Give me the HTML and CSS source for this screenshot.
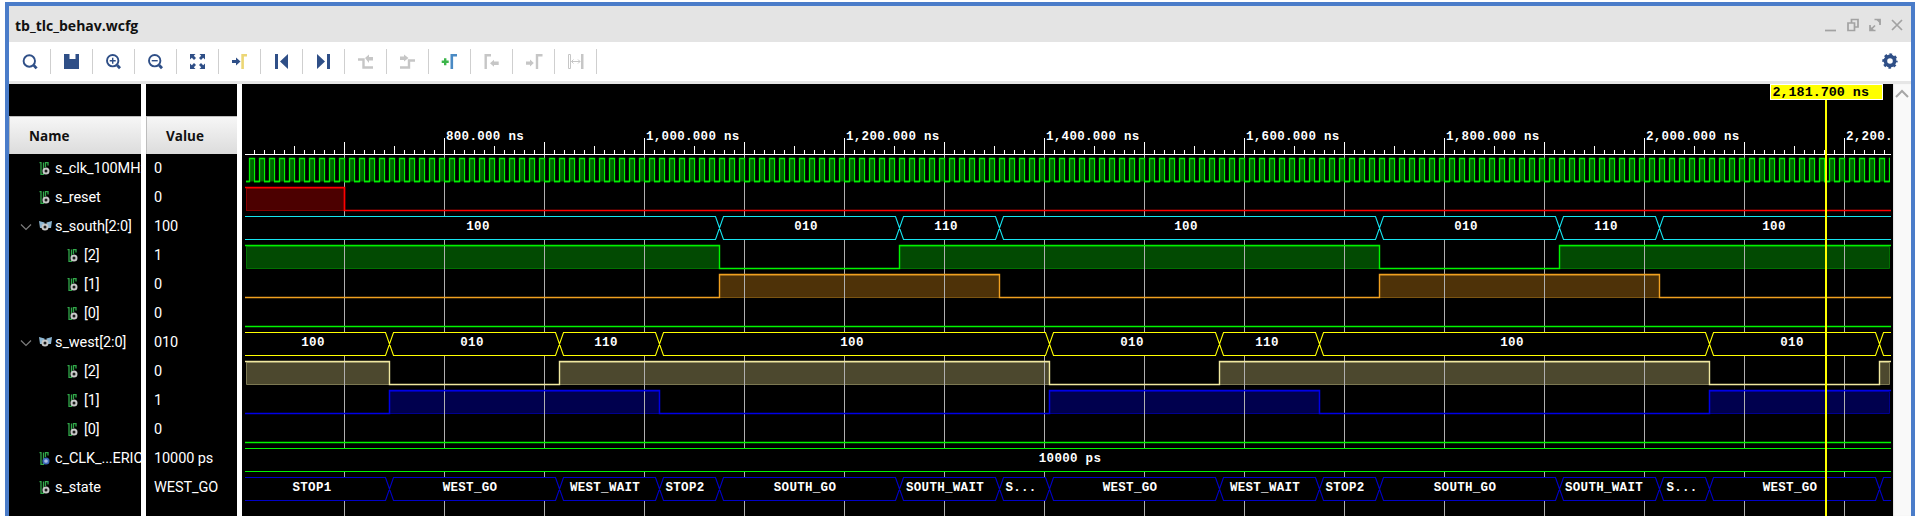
FILE: index.html
```html
<!DOCTYPE html>
<html lang="en">
<head>
<meta charset="utf-8">
<title>tb_tlc_behav.wcfg</title>
<link rel="stylesheet" href="styles.css">
</head>
<body>
<div class="window">
  <header class="titlebar">
    <span class="title">tb_tlc_behav.wcfg</span>
    <div class="winctl">
      <svg class="wc" viewBox="0 0 16 16"><path d="M2 13.5H13"/></svg>
      <svg class="wc" viewBox="0 0 16 16"><path d="M3 6H9.5V13.5H3ZM6.5 6V2.5H13V10H9.5"/></svg>
      <svg class="wc" viewBox="0 0 16 16"><path d="M3 8V13.5H8.5M13 8V2.5H7.5M3.5 13L8 8.5" /><path class="solid" d="M3 13.5V9L7.5 13.5ZM13.5 2.5V7L9 2.5Z"/></svg>
      <svg class="wc" viewBox="0 0 16 16"><path d="M3 3L13 13M13 3L3 13"/></svg>
    </div>
  </header>
  <nav class="toolbar">
    <div class="tool"><svg viewBox="0 0 42 39"><circle class="s-blue" cx="20.3" cy="19" r="5.7"/><path class="s-blue thick" d="M24.8 23.4L27.6 26.4"/></svg></div>
    <div class="tool"><svg viewBox="0 0 42 39"><path class="f-blue" d="M13 12H28V27H13Z"/><path class="f-white" d="M18.5 12H24.5V17H18.5Z"/></svg></div>
    <div class="tool"><svg viewBox="0 0 42 39"><circle class="s-blue" cx="19.7" cy="18.7" r="5.7"/><path class="s-blue thin" d="M16.7 18.7H22.7M19.7 15.7V21.7"/><path class="s-blue thick" d="M24.2 23.2L27 26.2"/></svg></div>
    <div class="tool"><svg viewBox="0 0 42 39"><circle class="s-blue" cx="19.7" cy="18.7" r="5.7"/><path class="s-blue thin" d="M16.7 18.7H22.7"/><path class="s-blue thick" d="M24.2 23.2L27 26.2"/></svg></div>
    <div class="tool"><svg viewBox="0 0 42 39"><path class="f-blue" d="M13 12H18.5L16.8 13.8L19 16L17 18L14.8 15.8L13 17.5ZM28 12H22.5L24.2 13.8L22 16L24 18L26.2 15.8L28 17.5ZM13 27H18.5L16.8 25.2L19 23L17 21L14.8 23.2L13 21.5ZM28 27H22.5L24.2 25.2L22 23L24 21L26.2 23.2L28 21.5Z"/></svg></div>
    <div class="tool"><svg viewBox="0 0 42 39"><path class="f-blue" d="M13 18H17V15.5L21.5 19.5L17 23.5V21H13Z"/><path class="s-yellow" d="M23.6 27V13.2H28"/></svg></div>
    <div class="tool"><svg viewBox="0 0 42 39"><path class="f-blue" d="M14 12H17V27H14ZM27 12V27L19 19.5Z"/></svg></div>
    <div class="tool"><svg viewBox="0 0 42 39"><path class="f-blue" d="M14 12V27L22 19.5ZM24 12H27V27H24Z"/></svg></div>
    <div class="tool"><svg viewBox="0 0 42 39"><path class="s-grey" d="M13 17.5H18.5V25.5H28"/><path class="f-grey" d="M20 16L24 12.5V15H28V18.5H24V21Z"/></svg></div>
    <div class="tool"><svg viewBox="0 0 42 39"><path class="s-grey" d="M13 25.5H22V18.5H28"/><path class="f-grey" d="M13 14.5H17V12.5L21.5 16L17 19.5V18H13Z"/></svg></div>
    <div class="tool"><svg viewBox="0 0 42 39"><path class="s-green" d="M12.7 19.7H19.7M16.2 16.2V23.2"/><path class="s-azure" d="M22.8 27V13.2H28"/></svg></div>
    <div class="tool"><svg viewBox="0 0 42 39"><path class="s-grey" d="M14.7 27V13.2H20"/><path class="f-grey" d="M19 21.3L23 17.8V19.5H27.7V23H23V24.8Z"/></svg></div>
    <div class="tool"><svg viewBox="0 0 42 39"><path class="f-grey" d="M13 19.5H17V17.5L20.8 21L17 24.5V22.7H13Z"/><path class="s-grey" d="M24 27V13.2H29.5"/></svg></div>
    <div class="tool"><svg viewBox="0 0 42 39"><path class="s-grey hair" d="M13.5 12.5H15.5V26.5H13.5ZM16.5 19.5H25M18.5 17.5L16.5 19.5L18.5 21.5M23 17.5L25 19.5L23 21.5"/><path class="f-grey" d="M26 12H28.5V27H26Z"/></svg></div>
    <div class="gear-slot">
      <svg class="gear" viewBox="0 0 16 16"><circle class="g-ring" cx="8" cy="8" r="4.6"/><circle class="g-teeth" cx="8" cy="8" r="6.4"/></svg>
    </div>
  </nav>
  <main class="viewer">
    <section class="col col-name">
      <div class="col-top"></div>
      <div class="col-head">Name</div>
      <div class="row lvl0"><svg class="sig" viewBox="0 0 13 13"><path class="ic-g" d="M.5 .5H2V12.5H4.5V.5M6.5 5V.5H9V3.5"/><circle class="ic-c" cx="7" cy="9" r="2.5"/></svg><span>s_clk_100MHz</span></div>
      <div class="row lvl0"><svg class="sig" viewBox="0 0 13 13"><path class="ic-g" d="M.5 .5H2V12.5H4.5V.5M6.5 5V.5H9V3.5"/><circle class="ic-c" cx="7" cy="9" r="2.5"/></svg><span>s_reset</span></div>
      <div class="row lvlb"><svg class="chev" viewBox="0 0 12 12"><path d="M1 3.5L6 8.5L11 3.5"/></svg><svg class="sig" viewBox="0 0 13 13"><path class="ic-b" d="M0 1L5.5 2.6V8H1ZM13 1L7.5 2.6V8H12Z"/><circle class="ic-c" cx="6" cy="7" r="2.5"/></svg><span>s_south[2:0]</span></div>
      <div class="row lvl1"><svg class="sig" viewBox="0 0 13 13"><path class="ic-g" d="M.5 .5H2V12.5H4.5V.5M6.5 5V.5H9V3.5"/><circle class="ic-c" cx="7" cy="9" r="2.5"/></svg><span>[2]</span></div>
      <div class="row lvl1"><svg class="sig" viewBox="0 0 13 13"><path class="ic-g" d="M.5 .5H2V12.5H4.5V.5M6.5 5V.5H9V3.5"/><circle class="ic-c" cx="7" cy="9" r="2.5"/></svg><span>[1]</span></div>
      <div class="row lvl1"><svg class="sig" viewBox="0 0 13 13"><path class="ic-g" d="M.5 .5H2V12.5H4.5V.5M6.5 5V.5H9V3.5"/><circle class="ic-c" cx="7" cy="9" r="2.5"/></svg><span>[0]</span></div>
      <div class="row lvlb"><svg class="chev" viewBox="0 0 12 12"><path d="M1 3.5L6 8.5L11 3.5"/></svg><svg class="sig" viewBox="0 0 13 13"><path class="ic-b" d="M0 1L5.5 2.6V8H1ZM13 1L7.5 2.6V8H12Z"/><circle class="ic-c" cx="6" cy="7" r="2.5"/></svg><span>s_west[2:0]</span></div>
      <div class="row lvl1"><svg class="sig" viewBox="0 0 13 13"><path class="ic-g" d="M.5 .5H2V12.5H4.5V.5M6.5 5V.5H9V3.5"/><circle class="ic-c" cx="7" cy="9" r="2.5"/></svg><span>[2]</span></div>
      <div class="row lvl1"><svg class="sig" viewBox="0 0 13 13"><path class="ic-g" d="M.5 .5H2V12.5H4.5V.5M6.5 5V.5H9V3.5"/><circle class="ic-c" cx="7" cy="9" r="2.5"/></svg><span>[1]</span></div>
      <div class="row lvl1"><svg class="sig" viewBox="0 0 13 13"><path class="ic-g" d="M.5 .5H2V12.5H4.5V.5M6.5 5V.5H9V3.5"/><circle class="ic-c" cx="7" cy="9" r="2.5"/></svg><span>[0]</span></div>
      <div class="row lvl0"><svg class="sig" viewBox="0 0 13 13"><path class="ic-g" d="M.5 .5H2V12.5H4.5V.5M6.5 5V.5H9V3.5"/><circle class="ic-k" cx="7" cy="9" r="2.7"/></svg><span>c_CLK_...ERIO</span></div>
      <div class="row lvl0"><svg class="sig" viewBox="0 0 13 13"><path class="ic-g" d="M.5 .5H2V12.5H4.5V.5M6.5 5V.5H9V3.5"/><circle class="ic-c" cx="7" cy="9" r="2.5"/></svg><span>s_state</span></div>
    </section>
    <section class="col col-value">
      <div class="col-top"></div>
      <div class="col-head">Value</div>
      <div class="row val">0</div>
      <div class="row val">0</div>
      <div class="row val">100</div>
      <div class="row val">1</div>
      <div class="row val">0</div>
      <div class="row val">0</div>
      <div class="row val">010</div>
      <div class="row val">0</div>
      <div class="row val">1</div>
      <div class="row val">0</div>
      <div class="row val">10000 ps</div>
      <div class="row val">WEST_GO</div>
    </section>
    <svg class="wave" viewBox="242 84 1651 432">
      <defs>
        <pattern id="ticks" patternUnits="userSpaceOnUse" x="244" y="138" width="100" height="16">
          <path class="tick-p" d="M0 4H1V16H0ZM10 12H11V16H10ZM20 12H21V16H20ZM30 12H31V16H30ZM40 12H41V16H40ZM50 8H51V16H50ZM60 12H61V16H60ZM70 12H71V16H70ZM80 12H81V16H80ZM90 12H91V16H90Z"/>
        </pattern>
        <pattern id="clock" patternUnits="userSpaceOnUse" x="244" y="156" width="10" height="28">
          <rect class="clk-fill" x="5.5" y="2.5" width="5" height="23"/>
          <path class="clk-line" d="M0 25.5H5.5V2.5H10.5"/>
          <path class="clk-line" d="M0 2.5H.5V25.5H5.5"/>
        </pattern>
      </defs>

      <!-- filled high levels -->
      <rect class="fill-red" x="246.5" y="188.5" width="98" height="22"/>
      <path class="fill-green" d="M246.5 246.5H719.5V268.5H246.5ZM899.5 246.5H1379.5V268.5H899.5ZM1559.5 246.5H1889.5V268.5H1559.5Z"/>
      <path class="fill-orange" d="M719.5 275.5H999.5V297.5H719.5ZM1379.5 275.5H1659.5V297.5H1379.5Z"/>
      <path class="fill-sand" d="M246.5 362.5H389.5V384.5H246.5ZM559.5 362.5H1049.5V384.5H559.5ZM1219.5 362.5H1709.5V384.5H1219.5ZM1879.5 362.5H1889.5V384.5H1879.5Z"/>
      <path class="fill-navy" d="M389.5 391.5H659.5V413.5H389.5ZM1049.5 391.5H1319.5V413.5H1049.5ZM1709.5 391.5H1889.5V413.5H1709.5Z"/>

      <!-- time grid -->
      <path class="grid" d="M344.5 154V516M444.5 154V516M544.5 154V516M644.5 154V516M744.5 154V516M844.5 154V516M944.5 154V516M1044.5 154V516M1144.5 154V516M1244.5 154V516M1344.5 154V516M1444.5 154V516M1544.5 154V516M1644.5 154V516M1744.5 154V516M1844.5 154V516"/>

      <!-- bus interiors hide the grid -->
      <rect class="mask" x="245" y="217" width="1646" height="23"/>
      <rect class="mask" x="245" y="333" width="1646" height="23"/>
      <rect class="mask" x="245" y="449" width="1646" height="23"/>
      <rect class="mask" x="245" y="478" width="1646" height="23"/>

      <!-- ruler -->
      <rect class="fill-ticks" x="245" y="138" width="1646" height="16"/>
      <path class="major" d="M444.5 138V154M644.5 138V154M844.5 138V154M1044.5 138V154M1244.5 138V154M1444.5 138V154M1644.5 138V154M1844.5 138V154"/>
      <path class="major" d="M245 154.5H1891"/>
      <text class="ruler" x="446" y="140">800.000 ns</text>
      <text class="ruler" x="646" y="140">1,000.000 ns</text>
      <text class="ruler" x="846" y="140">1,200.000 ns</text>
      <text class="ruler" x="1046" y="140">1,400.000 ns</text>
      <text class="ruler" x="1246" y="140">1,600.000 ns</text>
      <text class="ruler" x="1446" y="140">1,800.000 ns</text>
      <text class="ruler" x="1646" y="140">2,000.000 ns</text>
      <text class="ruler" x="1846" y="140">2,200.</text>

      <!-- s_clk_100MHz -->
      <rect class="clock" x="246" y="156" width="1644" height="28"/>

      <!-- s_reset -->
      <path class="w-red" d="M245 187.5H344.5V210.5H1891"/>

      <!-- s_south -->
      <path class="w-cyan" d="M245 216.5H715.5L723.5 239.5H895.5L903.5 216.5H995.5L1003.5 239.5H1375.5L1383.5 216.5H1555.5L1563.5 239.5H1655.5L1663.5 216.5H1891M245 239.5H715.5L723.5 216.5H895.5L903.5 239.5H995.5L1003.5 216.5H1375.5L1383.5 239.5H1555.5L1563.5 216.5H1655.5L1663.5 239.5H1891"/>
      <text class="bus" x="478" y="230">100</text>
      <text class="bus" x="806" y="230">010</text>
      <text class="bus" x="946" y="230">110</text>
      <text class="bus" x="1186" y="230">100</text>
      <text class="bus" x="1466" y="230">010</text>
      <text class="bus" x="1606" y="230">110</text>
      <text class="bus" x="1774" y="230">100</text>
      <path class="w-green" d="M245 245.5H719.5V268.5H899.5V245.5H1379.5V268.5H1559.5V245.5H1891"/>
      <path class="w-orange" d="M245 297.5H719.5V274.5H999.5V297.5H1379.5V274.5H1659.5V297.5H1891"/>
      <path class="w-green" d="M245 326.5H1891"/>

      <!-- s_west -->
      <path class="w-yellow" d="M245 332.5H385.5L393.5 355.5H555.5L563.5 332.5H655.5L663.5 355.5H1045.5L1053.5 332.5H1215.5L1223.5 355.5H1315.5L1323.5 332.5H1705.5L1713.5 355.5H1875.5L1883.5 332.5H1891M245 355.5H385.5L393.5 332.5H555.5L563.5 355.5H655.5L663.5 332.5H1045.5L1053.5 355.5H1215.5L1223.5 332.5H1315.5L1323.5 355.5H1705.5L1713.5 332.5H1875.5L1883.5 355.5H1891"/>
      <text class="bus" x="313" y="346">100</text>
      <text class="bus" x="472" y="346">010</text>
      <text class="bus" x="606" y="346">110</text>
      <text class="bus" x="852" y="346">100</text>
      <text class="bus" x="1132" y="346">010</text>
      <text class="bus" x="1267" y="346">110</text>
      <text class="bus" x="1512" y="346">100</text>
      <text class="bus" x="1792" y="346">010</text>
      <path class="w-sand" d="M245 361.5H389.5V384.5H559.5V361.5H1049.5V384.5H1219.5V361.5H1709.5V384.5H1879.5V361.5H1891"/>
      <path class="w-blue" d="M245 413.5H389.5V390.5H659.5V413.5H1049.5V390.5H1319.5V413.5H1709.5V390.5H1891"/>
      <path class="w-green" d="M245 442.5H1891"/>

      <!-- c_CLK_PERIOD -->
      <path class="w-green thin" d="M245 448.5H1891M245 471.5H1891"/>
      <text class="bus" x="1070" y="462">10000 ps</text>

      <!-- s_state -->
      <path class="w-navy" d="M245 477.5H385.5L393.5 500.5H555.5L563.5 477.5H655.5L663.5 500.5H715.5L723.5 477.5H895.5L903.5 500.5H995.5L1003.5 477.5H1045.5L1053.5 500.5H1215.5L1223.5 477.5H1315.5L1323.5 500.5H1375.5L1383.5 477.5H1555.5L1563.5 500.5H1655.5L1663.5 477.5H1705.5L1713.5 500.5H1875.5L1883.5 477.5H1891M245 500.5H385.5L393.5 477.5H555.5L563.5 500.5H655.5L663.5 477.5H715.5L723.5 500.5H895.5L903.5 477.5H995.5L1003.5 500.5H1045.5L1053.5 477.5H1215.5L1223.5 500.5H1315.5L1323.5 477.5H1375.5L1383.5 500.5H1555.5L1563.5 477.5H1655.5L1663.5 500.5H1705.5L1713.5 477.5H1875.5L1883.5 500.5H1891"/>
      <text class="bus" x="312" y="491">STOP1</text>
      <text class="bus" x="470" y="491">WEST_GO</text>
      <text class="bus" x="605" y="491">WEST_WAIT</text>
      <text class="bus" x="685" y="491">STOP2</text>
      <text class="bus" x="805" y="491">SOUTH_GO</text>
      <text class="bus" x="945" y="491">SOUTH_WAIT</text>
      <text class="bus" x="1021" y="491">S...</text>
      <text class="bus" x="1130" y="491">WEST_GO</text>
      <text class="bus" x="1265" y="491">WEST_WAIT</text>
      <text class="bus" x="1345" y="491">STOP2</text>
      <text class="bus" x="1465" y="491">SOUTH_GO</text>
      <text class="bus" x="1604" y="491">SOUTH_WAIT</text>
      <text class="bus" x="1682" y="491">S...</text>
      <text class="bus" x="1790" y="491">WEST_GO</text>

      <!-- cursor -->
      <rect class="cursor-line" x="1825" y="99" width="2" height="417"/>
      <rect class="cursor-box" x="1770.5" y="84.5" width="112" height="15"/>
      <text class="cursor-text" x="1772.5" y="96">2,181.700 ns</text>
    </svg>
    <aside class="scrollbar">
      <svg class="scroll-up" viewBox="0 0 14 10"><path d="M1 8L7 2L13 8"/></svg>
    </aside>
  </main>
</div>
</body>
</html>
```
FILE: styles.css
```css
* { box-sizing: border-box; }
html, body { margin: 0; height: 100%; overflow: hidden; background: #fff; }
body { padding: 2px 0 0 5px; font-family: "Open Sans", "Noto Sans", sans-serif; }

.window {
  width: 1910px;
  height: 514px;
  border: 4px solid #4a7cc9;
  border-bottom: 0;
  display: flex;
  flex-direction: column;
  overflow: hidden;
}

/* title bar */
.titlebar {
  height: 36px;
  flex: none;
  background: #e4e4e4;
  display: flex;
  align-items: center;
  padding: 2px 6px 0 6px;
}
.title { font-size: 14px; font-weight: 700; color: #111; }
.winctl { margin-left: auto; display: flex; gap: 6px; }
.wc { width: 16px; height: 16px; display: block; }
.wc path { fill: none; stroke: #a2a2a2; stroke-width: 1.7; }
.wc path.solid { fill: #a2a2a2; stroke: none; }

/* toolbar */
.toolbar {
  height: 42px;
  flex: none;
  background: #fff;
  border-bottom: 3px solid #e6e6e6;
  display: flex;
  align-items: stretch;
}
.tool { width: 42px; height: 39px; flex: none; position: relative; display: flex; }
.tool svg { width: 42px; height: 39px; display: block; }
.tool::after {
  content: "";
  position: absolute;
  right: 0;
  top: 7px;
  height: 25px;
  width: 1px;
  background: #cfcfcf;
}
.gear-slot { margin-left: auto; padding: 11px 13px 0 0; }
.gear { width: 16px; height: 16px; display: block; }
.g-ring { fill: none; stroke: #2f4f87; stroke-width: 3.6; }
.g-teeth { fill: none; stroke: #2f4f87; stroke-width: 2.6; stroke-dasharray: 2.6 2.43; stroke-dashoffset: 1.3; }

.s-blue { fill: none; stroke: #2f4f87; stroke-width: 1.9; }
.s-blue.thin { stroke-width: 1.4; }
.s-blue.thick { stroke-width: 2.8; }
.f-blue { fill: #2f4f87; }
.f-white { fill: #fff; }
.f-grey { fill: #c6c6c6; }
.s-grey { fill: none; stroke: #c6c6c6; stroke-width: 2.4; }
.s-grey.hair { stroke-width: 1; }
.s-yellow { fill: none; stroke: #ecd675; stroke-width: 2.6; }
.s-green { fill: none; stroke: #3cb54a; stroke-width: 2.4; }
.s-azure { fill: none; stroke: #4a8ac4; stroke-width: 2.6; }

/* viewer */
.viewer { flex: 1; min-height: 0; display: flex; background: #fff; }
.col { background: #000; flex: none; overflow: hidden; color: #fff; }
.col-name { width: 132px; margin-right: 5px; }
.col-value { width: 91px; margin-right: 5px; }
.col-top { height: 32px; }
.col-head {
  height: 38px;
  background: linear-gradient(#f6f6f6, #dcdcdc);
  border: 1px solid #bdbdbd;
  border-width: 1px 0 0 1px;
  color: #111;
  font-size: 13.5px;
  font-weight: 700;
  display: flex;
  align-items: center;
}
.col-name .col-head { padding-left: 19px; }
.col-value .col-head { padding-left: 19px; }

.row {
  height: 29px;
  display: flex;
  align-items: center;
  font-family: Roboto, "Open Sans", sans-serif;
  font-size: 14.5px;
  letter-spacing: -0.1px;
  white-space: nowrap;
  color: #fff;
}
.val { padding-left: 8px; }
.lvl0 { padding-left: 30px; }
.lvlb { padding-left: 11px; }
.lvl1 { padding-left: 58px; }
.sig { width: 13px; height: 13px; flex: none; margin-right: 3px; }
.lvl1 .sig { margin-right: 4px; }
.chev { width: 12px; height: 12px; flex: none; margin-right: 7px; }
.chev path { fill: none; stroke: #7c7c7c; stroke-width: 1.2; }
.ic-g { fill: none; stroke: #31a84a; stroke-width: 1.3; }
.ic-c { fill: #1c1c1c; stroke: #c8c8c8; stroke-width: 2; }
.ic-k { fill: #a8bde4; stroke: #3a64b8; stroke-width: 1.7; }
.ic-b { fill: #8db6d2; }

/* waveform canvas */
.wave { width: 1651px; height: 432px; flex: none; display: block; background: #000; }
.fill-ticks { fill: url(#ticks); }
.tick-p { fill: #fff; }
.major { fill: none; stroke: #fff; stroke-width: 1; }
.grid { fill: none; stroke: #b0b0b0; stroke-width: 1; }
.mask { fill: #000; }
.ruler, .bus {
  font-family: "Liberation Mono", monospace;
  font-size: 12.5px;
  letter-spacing: 0.3px;
  font-weight: 700;
  fill: #fff;
}
.bus { text-anchor: middle; }
.clock { fill: url(#clock); }
.clk-fill { fill: #006400; }
.clk-line { fill: none; stroke: #00f000; stroke-width: 1.3; }
.w-red, .w-cyan, .w-green, .w-orange, .w-yellow, .w-sand, .w-blue, .w-navy { fill: none; stroke-width: 1.4; }
.w-red { stroke: #ff0000; stroke-width: 1.7; }
.w-cyan { stroke: #16e4f0; stroke-width: 1.1; }
.w-green { stroke: #00f400; }
.w-green.thin { stroke-width: 1.1; }
.w-orange { stroke: #f0a020; }
.w-yellow { stroke: #ffff00; stroke-width: 1.1; }
.w-sand { stroke: #f0e8a0; }
.w-blue { stroke: #0000e6; stroke-width: 1.5; }
.w-navy { stroke: #0000c8; stroke-width: 1.1; }
.fill-red { fill: #4c0000; stroke: #880000; }
.fill-green { fill: #024a02; stroke: #017001; }
.fill-orange { fill: #4e3208; stroke: #7a5412; }
.fill-sand { fill: #4c482e; stroke: #7c7852; }
.fill-navy { fill: #00004e; stroke: #000090; }
.cursor-line { fill: #ffff00; }
.cursor-box { fill: #ffff00; stroke: #fff; }
.cursor-text {
  font-family: "Liberation Mono", monospace;
  font-size: 13.4px;
  font-weight: 700;
  fill: #000;
}

/* scrollbar */
.scrollbar {
  flex: 1;
  background: #f9f9f9;
  box-shadow: inset 1px 0 1px #e4e4e4;
  display: flex;
  justify-content: center;
  align-items: flex-start;
  padding-top: 5px;
}
.scroll-up { width: 14px; height: 10px; display: block; }
.scroll-up path { fill: none; stroke: #a6a6a6; stroke-width: 2; }
```
